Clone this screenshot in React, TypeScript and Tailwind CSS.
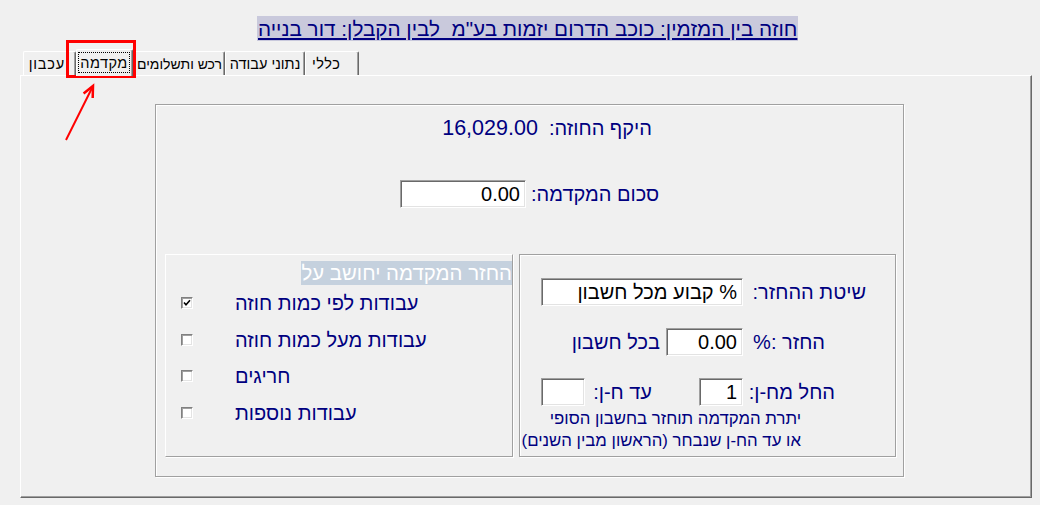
import React from "react";

function Tab({ cls, children }: { cls: string; children: React.ReactNode }) {
  return (
    <div
      dir="rtl"
      className={`flex h-[24px] items-center rounded-t-[2px] border-l border-t border-r border-l-white border-t-white border-r-[#696969] shadow-[inset_-1px_0_0_#a0a0a0] leading-[16px] text-black whitespace-nowrap ${cls}`}
    >
      {children}
    </div>
  );
}

function Field({ cls, value }: { cls: string; value?: string }) {
  return (
    <div
      dir="rtl"
      className={`flex h-[28px] items-center bg-white border border-t-[#a0a0a0] border-l-[#a0a0a0] border-r-white border-b-white shadow-[inset_1px_1px_0_#696969,inset_-1px_-1px_0_#e3e3e3] pr-[5px] text-[20px] leading-[22px] text-black whitespace-nowrap ${cls}`}
    >
      {value}
    </div>
  );
}

function Check({ checked }: { checked?: boolean }) {
  return (
    <div className="flex h-[12px] w-[12px] items-center justify-center bg-white border border-t-[#808080] border-l-[#808080] border-r-white border-b-white shadow-[inset_1px_1px_0_#a0a0a0,inset_-1px_-1px_0_#e3e3e3]">
      {checked && (
        <svg width="8" height="8" viewBox="0 0 8 8">
          <path d="M1 3.5 L3 5.8 L7 1.3" fill="none" stroke="#000" strokeWidth="1.6" />
        </svg>
      )}
    </div>
  );
}

function CheckRow({ cls, checked, label }: { cls: string; checked?: boolean; label: string }) {
  return (
    <div className={`flex items-center pl-[15px] ${cls}`}>
      <Check checked={checked} />
      <div dir="rtl" className="ml-[42px] text-[20px] leading-[22px] text-[#000080] whitespace-nowrap">
        {label}
      </div>
    </div>
  );
}

export default function App() {
  return (
    <div className="relative h-[505px] w-[1040px] overflow-hidden bg-[#f0f0f0] font-['Liberation_Sans',Arial,sans-serif]">
      {/* Title */}
      <div className="flex pl-[257px] pt-[16px]">
        <div
          dir="rtl"
          className="h-[25px] bg-[#c9c9dc] px-[1px] text-[20.7px] leading-[25px] text-[#000080] underline whitespace-pre"
        >
          חוזה בין המזמין: כוכב הדרום יזמות בע"מ  לבין הקבלן: דור בנייה
        </div>
      </div>

      {/* Tabs */}
      <div className="mt-[8px] flex h-[26px] items-end pl-[23px]">
        <Tab cls="w-[53px] justify-start pr-[10px] text-[14.5px] tracking-[0.8px]">עכבון</Tab>
        <div className="relative z-10 -mb-[1px] flex h-[27px] w-[57px] flex-col rounded-t-[2px] border-l border-t border-r border-l-white border-t-white border-r-[#696969] bg-[#f0f0f0] pl-[1px] pr-[2px] pt-[2px] shadow-[inset_-1px_0_0_#a0a0a0]">
          <div
            dir="rtl"
            className="flex h-[21px] items-center justify-center border border-dotted border-black text-[14.5px] leading-[16px] tracking-[0.5px] text-black"
          >
            מקדמה
          </div>
        </div>
        <Tab cls="ml-[1px] w-[91px] justify-center text-[14px]">רכש ותשלומים</Tab>
        <Tab cls="w-[80px] justify-center text-[14.5px]">נתוני עבודה</Tab>
        <Tab cls="w-[54px] justify-end pl-[6px] text-[14.5px] tracking-[0.5px]">כללי</Tab>
      </div>

      {/* Main panel */}
      <div className="ml-[20px] h-[423px] w-[1012px] border-l border-t border-r border-b border-l-white border-t-white border-r-[#696969] border-b-[#696969] pl-[134px] pt-[28px] shadow-[inset_-1px_-1px_0_#a0a0a0]">
        {/* Group box */}
        <div className="h-[373px] w-[749px] border border-[#a0a0a0] shadow-[inset_1px_1px_0_#ffffff,1px_1px_0_#ffffff]">
          <div
            dir="rtl"
            className="mt-[12px] h-[22px] pr-[251px] text-right text-[20px] leading-[22px] text-[#000080] whitespace-pre"
          >
            היקף החוזה:  <span className="text-[21.5px]">16,029.00</span>
          </div>

          <div className="mt-[41px] flex items-center pl-[244px]">
            <Field cls="w-[126px]" value="0.00" />
            <div dir="rtl" className="ml-[5px] text-[20px] leading-[22px] text-[#000080] whitespace-nowrap">
              סכום המקדמה:
            </div>
          </div>

          <div className="mt-[46px] flex pl-[9px]">
            {/* Left box */}
            <div className="h-[203px] w-[348px] border border-l-white border-t-white border-r-[#a0a0a0] border-b-[#a0a0a0] shadow-[1px_1px_0_#ffffff]">
              <div className="mt-[6px] flex justify-end">
                <div
                  dir="rtl"
                  className="h-[24px] bg-[#c5d1de] text-[20.4px] leading-[24px] text-white whitespace-nowrap"
                >
                  החזר המקדמה יחושב על
                </div>
              </div>
              <CheckRow cls="h-[36px]" checked label="עבודות לפי כמות חוזה" />
              <CheckRow cls="h-[37px]" label="עבודות מעל כמות חוזה" />
              <CheckRow cls="h-[36px]" label="חריגים" />
              <CheckRow cls="h-[37px]" label="עבודות נוספות" />
            </div>

            {/* Right box */}
            <div className="ml-[6px] h-[203px] w-[377px] border border-[#a0a0a0] shadow-[inset_1px_1px_0_#ffffff,1px_1px_0_#ffffff]">
              <div className="mt-[23px] flex items-center pl-[21px]">
                <Field cls="w-[202px]" value="% קבוע מכל חשבון" />
                <div dir="rtl" className="ml-[6px] w-[117px] text-right text-[20px] leading-[22px] text-[#000080] whitespace-nowrap">
                  שיטת ההחזר:
                </div>
              </div>

              <div className="mt-[22px] flex items-center">
                <div dir="rtl" className="ml-[49px] w-[91px] text-right text-[20px] leading-[22px] text-[#000080] whitespace-nowrap">
                  בכל חשבון
                </div>
                <Field cls="ml-[6px] w-[77px]" value="0.00" />
                <div dir="rtl" className="ml-[8px] w-[74px] text-right text-[20px] leading-[22px] text-[#000080] whitespace-nowrap">
                  החזר :%
                </div>
              </div>

              <div className="mt-[22px] flex items-center">
                <Field cls="ml-[21px] w-[44px]" />
                <div dir="rtl" className="ml-[6px] w-[61px] text-right text-[20px] leading-[22px] text-[#000080] whitespace-nowrap">
                  עד ח-ן:
                </div>
                <Field cls="ml-[47px] w-[44px]" value="1" />
                <div dir="rtl" className="ml-[6px] w-[86px] text-right text-[20px] leading-[22px] text-[#000080] whitespace-nowrap">
                  החל מח-ן:
                </div>
              </div>

              <div dir="rtl" className="mt-[2px] w-[281px] text-right text-[16.8px] leading-[22px] text-[#000080] whitespace-nowrap">
                יתרת המקדמה תוחזר בחשבון הסופי
              </div>
              <div dir="rtl" className="w-[281px] text-right text-[16.8px] leading-[22px] text-[#000080] whitespace-nowrap">
                או עד הח-ן שנבחר (הראשון מבין השנים)
              </div>
            </div>
          </div>
        </div>
      </div>

      {/* Red annotation overlay */}
      <div className="pointer-events-none absolute left-[66px] top-[40px] h-[38px] w-[70px] border-[3px] border-[#ff0000]" />
      <svg className="pointer-events-none absolute left-0 top-0" width="1040" height="505">
        <line x1="66" y1="140" x2="92" y2="88" stroke="#ff0000" strokeWidth="2" />
        <polyline points="83.6,93.5 93,86 92.7,98" fill="none" stroke="#ff0000" strokeWidth="2.5" strokeLinejoin="miter" />
      </svg>
    </div>
  );
}
